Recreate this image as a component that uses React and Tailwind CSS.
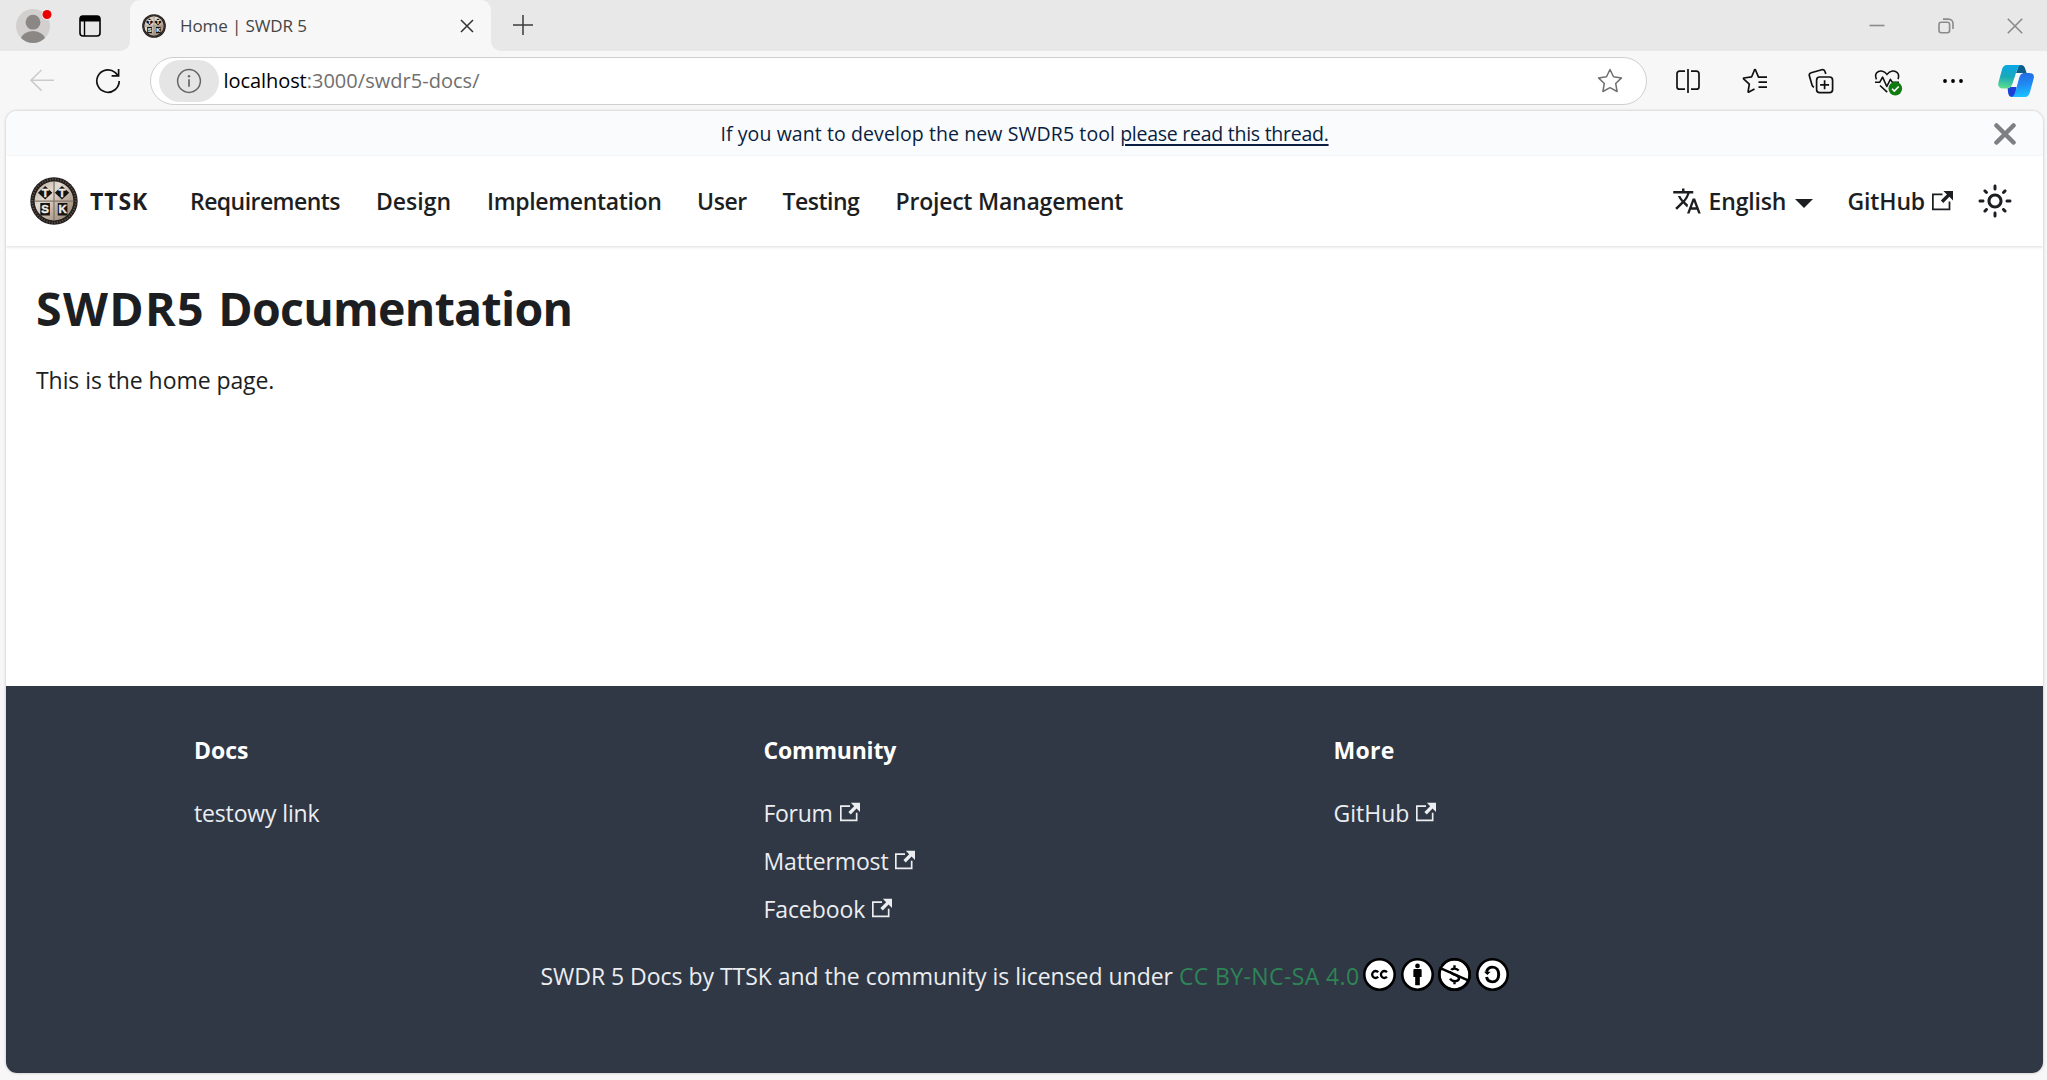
import { MdTranslate } from "react-icons/md";

function Emblem({ className }) {
  return (
    <svg viewBox="0 0 48 48" className={className}>
      <defs>
        <linearGradient id="emblem-metal" x1="0" y1="0" x2="1" y2="1">
          <stop offset="0" stopColor="#b5a698" />
          <stop offset="0.35" stopColor="#e3dbd2" />
          <stop offset="0.65" stopColor="#b9aa9a" />
          <stop offset="1" stopColor="#8d7c6b" />
        </linearGradient>
      </defs>
      <circle cx="24" cy="24" r="23.7" fill="#221d1a" />
      <circle cx="24" cy="24" r="21.7" fill="none" stroke="#77706a" strokeWidth="2" strokeDasharray="1.2 1.5" opacity="0.65" />
      <circle cx="24" cy="24" r="19.4" fill="url(#emblem-metal)" />
      <path d="M24 5v38M5 24.2h38" stroke="#84776b" strokeWidth="1.3" />
      <path d="M15.2 9l7.2 6.8-7.2 6.8-7.200-6.800zM32 9l7.200 6.800-7.200 6.800-7.200-6.800z" fill="#16120f" />
      <path d="M10.300 26h9.600v12.600h-9.600zM27.800 26h9.600v12.600h-9.600z" fill="#16120f" />
      <g fill="#f1ece6" stroke="#f1ece6" strokeWidth="0.4" fontFamily="Liberation Sans, sans-serif" fontWeight="700" textAnchor="middle">
        <text x="15.200" y="20" fontSize="11.500">T</text>
        <text x="32" y="20" fontSize="11.500">T</text>
        <text x="15.100" y="36.400" fontSize="11.500">S</text>
        <text x="32.700" y="36.400" fontSize="11.500">K</text>
      </g>
    </svg>
  );
}

function ExternalIcon({ className }) {
  return (
    <svg viewBox="0 0 24 24" fill="currentColor" className={className}>
      <path d="M21 13v10h-21v-19h12v2h-10v15h17v-8h2zm3-12h-10.988l4.035 4-6.977 7.07 2.828 2.828 6.977-7.07 4.125 4.172v-11z" />
    </svg>
  );
}

function TabStrip() {
  return (
    <div className="flex h-[51px] bg-[#f7f7f7]">
      <div className="flex w-[130px] items-center rounded-br-[10px] bg-[#e8e8e8] pl-4">
        <svg viewBox="0 0 36 36" className="h-9 w-9 shrink-0">
          <defs>
            <clipPath id="avatar-clip"><circle cx="17" cy="18" r="17" /></clipPath>
          </defs>
          <circle cx="17" cy="18" r="17" fill="#d2d0ce" />
          <g clipPath="url(#avatar-clip)" fill="#8a8785">
            <circle cx="17" cy="14.2" r="7.4" />
            <ellipse cx="17" cy="32" rx="12.3" ry="9" />
          </g>
          <circle cx="31" cy="6.5" r="5.4" fill="#fbe9e9" />
          <circle cx="31" cy="6.5" r="4.5" fill="#e60000" />
        </svg>
        <svg viewBox="0 0 22 22" className="ml-[27px] h-[22px] w-[22px] shrink-0" fill="none" stroke="#000">
          <rect x="1" y="1" width="20" height="20" rx="3" strokeWidth="1.6" />
          <path d="M1.5 6V3.5a2 2 0 0 1 2-2h15a2 2 0 0 1 2 2V6z" fill="#000" />
          <path d="M5.5 6v15" strokeWidth="1.4" />
        </svg>
      </div>
      <div className="w-[361px] bg-linear-to-b from-[#e8e8e8] from-50% to-[#f7f7f7] to-50%">
        <div className="flex h-full items-center rounded-t-[10px] bg-[#f7f7f7] pl-3">
          <Emblem className="h-6 w-6" />
          <span className="ml-[14px] w-[280px] text-[17px] tracking-[-0.1px] text-[#444]">Home | SWDR 5</span>
          <svg viewBox="0 0 14 14" className="h-[14px] w-[14px]" stroke="#333" strokeWidth="1.5">
            <path d="M1 1l12 12M13 1L1 13" />
          </svg>
        </div>
      </div>
      <div className="flex flex-1 items-center justify-between rounded-bl-[10px] bg-[#e8e8e8] pr-[24.5px] pl-[21px]">
        <svg viewBox="0 0 22 22" className="mb-px h-[22px] w-[22px]" stroke="#3b3b3b" strokeWidth="1.5">
          <path d="M11 1v20M1 11h20" />
        </svg>
        <div className="flex items-center gap-[53px]">
          <svg viewBox="0 0 16 16" className="h-4 w-4"><path d="M0.5 7.500h15" stroke="#8a8a8a" strokeWidth="1.6" /></svg>
          <svg viewBox="0 0 16 16" className="h-4 w-4" fill="none" stroke="#8a8a8a" strokeWidth="1.6">
            <rect x="1" y="4.2" width="10.6" height="10.6" rx="2.2" />
            <path d="M5 1.1h5.5a4.5 4.5 0 0 1 4.5 4.5V11" />
          </svg>
          <svg viewBox="0 0 16 16" className="h-4 w-4" stroke="#8a8a8a" strokeWidth="1.6"><path d="M0.8 0.8l14.4 14.4M15.2 0.8L0.8 15.2" /></svg>
        </div>
      </div>
    </div>
  );
}

function Toolbar() {
  return (
    <div className="flex h-[60px] items-center bg-[#f7f7f7] pr-[12px] pl-[29px]">
      <svg viewBox="0 0 26 24" className="h-6 w-[26px]" fill="none" stroke="#cbcbcb" strokeWidth="1.6">
        <path d="M25 11.3H2M12.5 1L2 11.3l10.5 10.3" />
      </svg>
      <svg viewBox="0 0 26 26" className="ml-10 h-[26px] w-[26px]" fill="none" stroke="#111" strokeWidth="1.7">
        <path d="M24.2 13A11.2 11.2 0 1 1 20 4.3L23.3 7.6" />
        <path d="M23.6 1v6.9H16.6" />
      </svg>
      <div className="ml-[29px] flex h-[48px] w-[1497px] items-center rounded-full border-[1.5px] border-[#cfcfcf] bg-white pr-[23.5px] pl-[8px]">
        <div className="flex h-[42px] w-[60px] items-center justify-center rounded-full bg-[#e5e5e5]">
          <svg viewBox="0 0 26 26" className="h-[26px] w-[26px]" fill="none" stroke="#666" strokeWidth="1.5">
            <circle cx="13" cy="13" r="11.4" />
            <path d="M13 11.3v7.4" strokeWidth="1.7" />
            <circle cx="13" cy="8.2" r="1.2" fill="#666" stroke="none" />
          </svg>
        </div>
        <div className="ml-[4.5px] flex-1 text-[20px] tracking-[0.03px] text-[#6f6f6f]"><span className="tracking-[-0.07px] text-black">localhost</span>:3000/swdr5-docs/</div>
        <svg viewBox="0 0 26 26" className="h-[26px] w-[26px]" fill="none" stroke="#707070" strokeWidth="1.5" strokeLinejoin="round">
          <path d="M13 1.5l3.5 7.3 8 1.1-5.8 5.6 1.4 8L13 19.7l-7.1 3.8 1.4-8-5.8-5.6 8-1.1z" />
        </svg>
      </div>
      <div className="ml-[28px] flex flex-1 items-center">
        <svg viewBox="0 0 26 26" className="h-[26px] w-[26px]" fill="none" stroke="#111" strokeWidth="1.7">
          <path d="M10 3.2H4.5a2.5 2.5 0 0 0-2.5 2.5v13a2.5 2.5 0 0 0 2.5 2.5H10M16 3.2h5.5a2.5 2.5 0 0 1 2.5 2.5v13a2.5 2.5 0 0 1-2.5 2.5H16M13 1v24" />
        </svg>
        <svg viewBox="0 0 26 26" className="ml-[41px] h-[26px] w-[26px]" fill="none" stroke="#111" strokeWidth="1.7" strokeLinejoin="round">
          <path d="M25 9.2h-8.5l-3-7.2a.5.5 0 0 0-1 0L9.7 8.8 1.8 10a.5.5 0 0 0-.2.8l5.7 5.4-1.2 7.4a.5.5 0 0 0 .8.5l5.6-3.2M16.5 14.2H25M16.5 19.2H25" />
        </svg>
        <svg viewBox="0 0 26 26" className="ml-10 h-[26px] w-[26px]" fill="none" stroke="#111" strokeWidth="1.7">
          <rect x="8.6" y="9" width="16" height="15.6" rx="3.2" />
          <path d="M16.6 12.3v9M12.1 16.8h9M17.8 6l-.8-2.4a2.6 2.6 0 0 0-3.2-1.8L3.2 4.7a2.6 2.6 0 0 0-1.8 3.2l2.7 9.3a2.8 2.8 0 0 0 1.9 1.9" />
        </svg>
        <svg viewBox="0 0 29 28" className="mt-0.5 ml-10 h-7 w-[29px]" fill="none" stroke="#111" strokeWidth="1.6">
          <path d="M2.5 11.4C-.2 5.5 4 2.6 7.6 3c2.6.3 4.2 1.7 5.4 3.4 1.2-1.7 2.8-3.1 5.4-3.4 3.6-.4 7.8 2.5 5.6 8.1" />
          <path d="M1 14.2h4.8l2.8-5 4.2 9.3 3.6-7.2 1.8 2.9H25M6 17.5l7.2 6.7" strokeLinejoin="round" />
          <circle cx="21.3" cy="20.6" r="6.8" fill="#107c10" stroke="none" />
          <path d="M18 20.8l2.3 2.3 4.4-4.6" stroke="#fff" />
        </svg>
        <svg viewBox="0 0 22 6" className="ml-[39px] h-[6px] w-[22px]"><circle cx="3" cy="3" r="1.9" /><circle cx="11" cy="3" r="1.9" /><circle cx="19" cy="3" r="1.9" /></svg>
        <svg viewBox="0 0 36 34" className="ml-[34px] h-[34px] w-9 shrink-0">
          <defs>
            <linearGradient id="cp-left" x1="0.4" y1="0" x2="0.3" y2="1"><stop offset="0" stopColor="#0ba6e6" /><stop offset="0.5" stopColor="#17a9b8" /><stop offset="1" stopColor="#5fdd8c" /></linearGradient>
            <linearGradient id="cp-right" x1="0.4" y1="0" x2="0.5" y2="1"><stop offset="0" stopColor="#2568e2" /><stop offset="0.5" stopColor="#1f8cf5" /><stop offset="1" stopColor="#1ac4ff" /></linearGradient>
          </defs>
          <path d="M18 9l3-8h2c2.300 0 3.500 1.500 4.300 4l1.300 4h-9z" fill="#0b5f88" />
          <path d="M9.500 23h9l-1.500 10h-3c-2.300 0-3.300-1.600-3.800-4z" fill="#1c3fd6" />
          <path d="M9 1h14.500c-2.500.3-3.800 2.500-4.500 5L14.800 18.500c-.9 3.200-2.200 5.900-5.600 5.900H5c-4 0-5.400-2.300-4.600-5.600L4 5.500C4.800 2.600 6.400 1 9 1z" fill="url(#cp-left)" />
          <path d="M26.500 9h4.500c4 0 5.500 2.300 4.700 5.600L32 28c-.8 3-2.400 5-5.200 5H13c2.600-.4 3.600-2.400 4.300-5l3.700-13.400C21.900 11.300 23.200 9 26.500 9z" fill="url(#cp-right)" />
        </svg>
      </div>
    </div>
  );
}

function Announcement() {
  return (
    <div className="flex h-[45px] items-center bg-[#fafbfc] pr-[27px] pl-[49px] text-[#091e42]">
      <div className="flex-1 text-center text-[19.5px] whitespace-pre">
        <span className="tracking-[0.09px]">If you want to develop the new SWDR5 tool </span>
        <a className="tracking-[-0.26px] underline decoration-[1.5px] underline-offset-[3px]">please read this thread.</a>
      </div>
      <svg viewBox="0 0 15 15" className="h-[22px] w-[22px]" stroke="#7d7f82" strokeWidth="3.1" strokeLinecap="round">
        <path d="M1.7 1.7l11.6 11.6M13.3 1.7L1.7 13.3" />
      </svg>
    </div>
  );
}

function Navbar() {
  return (
    <nav className="relative flex h-[90px] items-center bg-white px-6 text-[23px] font-semibold whitespace-nowrap text-[#1c1e21] shadow-[0_1px_3px_rgba(0,0,0,0.14)]">
      <Emblem className="h-12 w-12" />
      <span className="ml-3 w-[100px] font-bold tracking-[0.9px]">TTSK</span>
      <div className="flex gap-9">
        <a className="w-[150px] tracking-[-0.55px]">Requirements</a>
        <a className="w-[75px]">Design</a>
        <a className="w-[174px] tracking-[-0.35px]">Implementation</a>
        <a className="w-[49.5px] tracking-[-0.4px]">User</a>
        <a className="w-[77px] tracking-[-0.5px]">Testing</a>
        <a className="w-[228px] tracking-[-0.22px]">Project Management</a>
      </div>
      <div className="mr-[7px] ml-auto flex items-center">
        <MdTranslate className="h-[30px] w-[30px]" />
        <span className="ml-[7px] w-[86px] tracking-[-0.15px]">English</span>
        <svg viewBox="0 0 18 9" className="mt-1 h-[9px] w-[18px]" fill="currentColor"><path d="M0 0h18L9 9z" /></svg>
        <span className="ml-[35px] w-[84.5px] tracking-[-0.15px]">GitHub</span>
        <ExternalIcon className="mb-0.5 h-[21px] w-[21px]" />
        <svg viewBox="0 0 24 24" className="mr-[-1px] ml-[24px] h-9 w-9" fill="currentColor">
          <path d="M12,9c1.65,0,3,1.35,3,3s-1.35,3-3,3s-3-1.35-3-3S10.35,9,12,9 M12,7c-2.76,0-5,2.24-5,5s2.24,5,5,5s5-2.24,5-5 S14.76,7,12,7L12,7z M2,13l2,0c0.55,0,1-0.45,1-1s-0.45-1-1-1l-2,0c-0.55,0-1,0.45-1,1S1.45,13,2,13z M20,13l2,0c0.55,0,1-0.45,1-1 s-0.45-1-1-1l-2,0c-0.55,0-1,0.45-1,1S19.45,13,20,13z M11,2v2c0,0.55,0.45,1,1,1s1-0.45,1-1V2c0-0.55-0.45-1-1-1S11,1.45,11,2z M11,20v2c0,0.55,0.45,1,1,1s1-0.45,1-1v-2c0-0.55-0.45-1-1-1C11.45,19,11,19.45,11,20z M5.99,4.58c-0.39-0.39-1.03-0.39-1.41,0 c-0.39,0.39-0.39,1.03,0,1.41l1.06,1.06c0.39,0.39,1.03,0.39,1.41,0s0.39-1.03,0-1.41L5.99,4.58z M18.36,16.95 c-0.39-0.39-1.03-0.39-1.41,0c-0.39,0.39-0.39,1.03,0,1.41l1.06,1.06c0.39,0.39,1.03,0.39,1.41,0c0.39-0.39,0.39-1.03,0-1.41 L18.36,16.95z M19.42,5.99c0.39-0.39,0.39-1.03,0-1.41c-0.39-0.39-1.03-0.39-1.41,0l-1.06,1.06c-0.39,0.39-0.39,1.03,0,1.41 s1.03,0.39,1.41,0L19.42,5.99z M7.05,18.36c0.39-0.39,0.39-1.03,0-1.41c-0.39-0.39-1.03-0.39-1.41,0l-1.06,1.06 c-0.39,0.39-0.39,1.03,0,1.41s1.03,0.39,1.41,0L7.05,18.36z" />
        </svg>
      </div>
    </nav>
  );
}

function CcBadge({ children }) {
  return (
    <svg viewBox="0 0 64 64" className="h-[33px] w-[33px]">
      <circle cx="32" cy="32" r="29.5" fill="#fff" stroke="#000" strokeWidth="5" />
      {children}
    </svg>
  );
}

const columns = [
  { title: "Docs", titleClass: "tracking-[0px]", links: [{ label: "testowy link", cls: "tracking-[-0.15px]" }] },
  {
    title: "Community",
    titleClass: "tracking-[-0.2px]",
    links: [
      { label: "Forum", cls: "tracking-[-0.3px]", external: true },
      { label: "Mattermost", cls: "tracking-[-0.15px]", external: true },
      { label: "Facebook", cls: "tracking-[-0.1px]", external: true },
    ],
  },
  { title: "More", titleClass: "tracking-[0.3px]", links: [{ label: "GitHub", cls: "tracking-[0px]", external: true }] },
];

function Footer() {
  return (
    <footer className="h-[387px] bg-[#303846] pt-[46px] text-[23px] text-[#ebedf0]">
      <div className="grid grid-cols-[569.5px_570px_1fr] pl-[188px]">
        {columns.map((col) => (
          <div key={col.title}>
            <div className="mb-[21px] h-9 leading-9 font-bold text-white"><span className={col.titleClass}>{col.title}</span></div>
            {col.links.map((l) => (
              <div key={l.label} className="flex h-12 items-center">
                <span className={l.cls}>{l.label}</span>
                {l.external && <ExternalIcon className="mb-0.5 ml-[7px] h-[20px] w-[20px]" />}
              </div>
            ))}
          </div>
        ))}
      </div>
      <div className="mt-[25px] flex h-9 items-center pl-[534.5px] whitespace-nowrap">
        <span className="w-[638.5px] tracking-[-0.03px]">SWDR 5 Docs by TTSK and the community is licensed under</span>
        <a className="w-[184px] tracking-[0.38px] text-[#2e8555]">CC BY-NC-SA 4.0</a>
        <div className="mb-[3px] flex gap-[4.5px]">
          <CcBadge>
            <path d="M29.5 27.500a6.700 6.700 0 1 0 0 9M46.500 27.500a6.700 6.700 0 1 0 0 9" fill="none" stroke="#000" strokeWidth="4.600" />
          </CcBadge>
          <CcBadge>
            <circle cx="32" cy="15.500" r="4.600" />
            <path d="M26 21.500h12a2 2 0 0 1 2 2V37h-3.500v16h-9V37H24V23.500a2 2 0 0 1 2-2z" />
          </CcBadge>
          <CcBadge>
            <path d="M40 24.500c-2-3-4.600-4-7.800-4-4 0-7 2-7 5.500 0 4 3.500 5 7.500 6.500s8 2.700 8 7c0 3.500-3.300 5.500-7.700 5.500-4 0-7.500-1.500-9.700-5M32 14v6M32 45v6" fill="none" stroke="#000" strokeWidth="4.600" />
            <path d="M5 15.500L60 40" stroke="#fff" strokeWidth="3" />
            <path d="M4.500 19.500L59.500 44" stroke="#000" strokeWidth="4.600" />
            <circle cx="32" cy="32" r="29.500" fill="none" stroke="#000" strokeWidth="5" />
          </CcBadge>
          <CcBadge>
            <path d="M20.500 27c1.500-6 6-9.300 11.500-9.300 7.500 0 12 6 12 14.300s-4.800 14.300-12 14.300c-5.500 0-10.300-3.300-11.500-9.300" fill="none" stroke="#000" strokeWidth="5.800" />
            <path d="M15.500 26.500h13L22 33z" />
          </CcBadge>
        </div>
      </div>
    </footer>
  );
}

export default function App() {
  return (
    <div className="flex h-[1080px] w-[2047px] flex-col overflow-hidden bg-[#f7f7f7] font-['Open_Sans','Noto_Sans',sans-serif]">
      <TabStrip />
      <Toolbar />
      <div className="mr-1 ml-1.5 flex h-[962px] flex-col overflow-hidden rounded-[11px] bg-white shadow-[0_0_3px_rgba(0,0,0,0.25)]">
        <Announcement />
        <Navbar />
        <main className="flex-1 pt-[33px] pl-[30px] text-[#1c1e21]">
          <h1 className="h-[58px] text-[46.5px] leading-[58px] font-bold">
            <span className="tracking-[1.3px]">SWDR5 </span>
            <span className="tracking-[-0.7px]">Documentation</span>
          </h1>
          <p className="mt-[25px] text-[23px] leading-9 tracking-[-0.07px]">This is the home page.</p>
        </main>
        <Footer />
      </div>
    </div>
  );
}
